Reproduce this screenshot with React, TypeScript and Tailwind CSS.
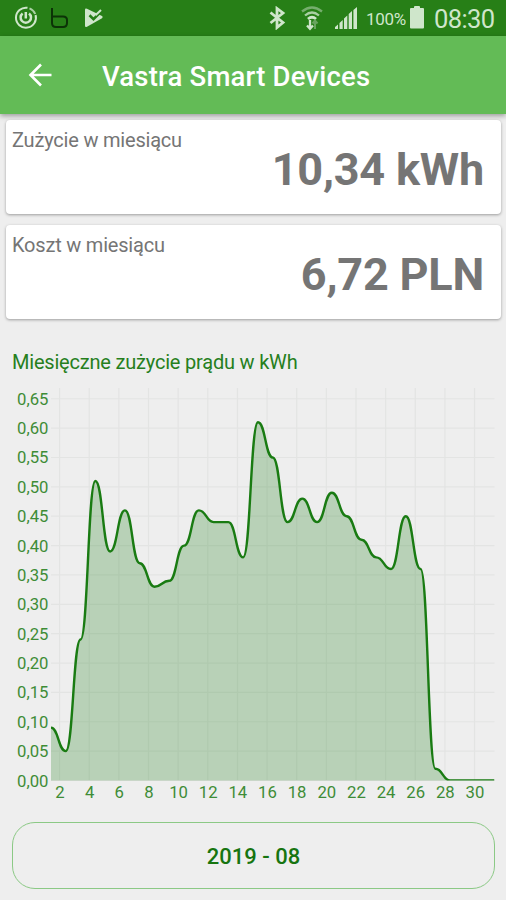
const days = [
  0.09, 0.05, 0.24, 0.51, 0.39, 0.46, 0.37, 0.33, 0.34, 0.4, 0.46, 0.44, 0.44, 0.38, 0.61, 0.55,
  0.44, 0.48, 0.44, 0.49, 0.45, 0.41, 0.38, 0.36, 0.45, 0.36, 0.02, 0, 0, 0, 0,
];

const yLabels = ["0,00", "0,05", "0,10", "0,15", "0,20", "0,25", "0,30", "0,35", "0,40", "0,45", "0,50", "0,55", "0,60", "0,65"];
const xLabels = [2, 4, 6, 8, 10, 12, 14, 16, 18, 20, 22, 24, 26, 28, 30];

const LEFT = 51;
const RIGHT = 494.5;
const TOP = 8;
const BASE = 400.5;
const STEP = (RIGHT - LEFT) / 30;

const px = (i: number) => LEFT + i * STEP;
const py = (v: number) => BASE - v * 587.3;

// horizontal bezier through every day
const line = days
  .map((v, i) => {
    if (i === 0) return `M${px(0)} ${py(v)}`;
    const mid = (px(i - 1) + px(i)) / 2;
    return `C${mid} ${py(days[i - 1])} ${mid} ${py(v)} ${px(i)} ${py(v)}`;
  })
  .join(" ");

function StatusBar() {
  return (
    <div className="flex h-[36px] shrink-0 items-center justify-between bg-[#277f17] pl-[14px] pr-[11px] text-[#cfe6cb]">
      <div className="flex items-center">
        <svg width="24" height="24" viewBox="0 0 24 24" fill="none" stroke="currentColor" strokeWidth="2">
          <path d="M13.5 1.8A10 10 0 1 0 21.6 9" />
          <path d="M15.5 2.4A10 10 0 0 1 21.2 8" stroke="#a9cfa3" />
          <path d="M8.6 7.4A5.2 5.2 0 1 0 15 7.4" strokeWidth="2.5" />
          <path d="M11.8 6v6.500" strokeWidth="2.5" />
        </svg>
        <svg className="ml-[12px]" width="20" height="24" viewBox="0 0 20 24" fill="none" stroke="#0c3307" strokeWidth="2">
          <path d="M2 2V17q0 4 4 4h7q4 0 4-4v-3q0-3.500-4-3.500H2" />
        </svg>
        <svg className="ml-[14px]" width="20" height="22" viewBox="0 0 20 22">
          <path d="M1 3q0-2 2-1.200l15 7.200q1.500 1 0 2.200L3 19.800q-2 .8-2-1z" fill="currentColor" />
          <path d="M5.500 8.300l4 3.800 9-9" fill="none" stroke="#277f17" strokeWidth="2.600" />
          <path d="M11.500 8.300l5.500-5.300" fill="none" stroke="currentColor" strokeWidth="2" />
        </svg>
      </div>
      <div className="flex items-center">
        <svg width="18" height="24" viewBox="0 0 18 24" fill="none" stroke="currentColor" strokeWidth="2.800">
          <path d="M1.500 6.500L14 16.500l-6 5V2.500L14 7 1.500 17" />
        </svg>
        <svg className="ml-[13px]" width="24" height="26" viewBox="0 0 24 26" fill="none" stroke="currentColor" strokeWidth="2.300">
          <path d="M2 6.500q10-8 20 0" stroke="#76ae6d" />
          <path d="M5 10.500q7-6 14 0" stroke="#a9cfa3" />
          <path d="M8 14q4-3.500 8 0" strokeWidth="2.800" />
          <path d="M10 15v8M7 20.500l3 3.200 3-3.200" />
          <path d="M15 24v-8M12.500 18.500l2.500-3 2.500 3" stroke="#69a45f" strokeWidth="2" />
        </svg>
        <svg className="ml-[11px]" width="23" height="24" viewBox="0 0 23 24" fill="currentColor">
          <path d="M0 23v-2l3-2.500V23zM4.500 23v-6l3.200-3v9zM9 23V12.500l3.300-3V23zM13.700 23V8l3.300-3v18zM18.400 23V4L22 1v22z" />
        </svg>
        <span className="ml-[8px] mt-[2px] w-[40px] whitespace-nowrap text-[17px] leading-none tracking-[-0.3px]">100%</span>
        <svg className="ml-[4px]" width="14" height="24" viewBox="0 0 14 24" fill="currentColor">
          <path d="M0 3q0-1 1-1h3V1q0-1 1-1h4q1 0 1 1v1h3q1 0 1 1v18.500q0 1-1 1H1q-1 0-1-1z" />
        </svg>
        <span className="ml-[10px] mt-[3px] w-[61px] whitespace-nowrap text-[25.500px] leading-none tracking-[-0.600px]">08:30</span>
      </div>
    </div>
  );
}

function Card({ label, value }: { label: string; value: string }) {
  return (
    <div className="h-[94px] rounded-[4px] bg-white px-[6px] pt-[8px] text-[#757575] shadow-[0_1px_3px_rgba(0,0,0,0.35)]">
      <div className="text-[20px] leading-[24px] tracking-[-0.2px]">{label}</div>
      <div className="-mt-[8px] pr-[11px] text-right text-[45px] font-bold leading-[52px] tracking-[-0.2px]">{value}</div>
    </div>
  );
}

function Chart() {
  return (
    <svg className="block shrink-0" width="506" height="428" viewBox="0 0 506 428">
      <g stroke="#e3e4e3" strokeWidth="1.200">
        {yLabels.map((l, i) => (
          <path key={l} d={`M${LEFT} ${py(i * 0.05)}H${RIGHT}`} />
        ))}
        {xLabels.map((l, i) => (
          <path key={l} d={`M${59.6 + i * 29.64} ${TOP}V${BASE}`} />
        ))}
      </g>
      <path d={`${line}V${BASE}H${LEFT}Z`} fill="#197b12" fillOpacity="0.25" />
      <clipPath id="plot">
        <path d={`M${LEFT} 0H${RIGHT}V${BASE}H${LEFT}Z`} />
      </clipPath>
      <path d={line} fill="none" stroke="#197b12" strokeWidth="2.400" clipPath="url(#plot)" />
      <g fill="#3e8c36" fontSize="16.700">
        {yLabels.map((l, i) => (
          <text key={l} x="48.500" y={py(i * 0.05) + 6} textAnchor="end">{l}</text>
        ))}
        {xLabels.map((l, i) => (
          <text key={l} x={60 + i * 29.64} y="418" textAnchor="middle">{l}</text>
        ))}
      </g>
    </svg>
  );
}

export default function App() {
  return (
    <div className="flex h-[900px] w-[506px] flex-col overflow-hidden bg-[#eeeeee] font-['Roboto',sans-serif]">
      <StatusBar />
      <header className="flex h-[78px] shrink-0 items-center bg-[#63bb56] pl-[28px] text-white shadow-[0_2px_5px_rgba(0,0,0,0.35)]">
        <svg width="24" height="24" viewBox="0 0 24 24" fill="none" stroke="currentColor" strokeWidth="2.600">
          <path d="M23.500 12H2.500M13 1.500L2.500 12 13 22.500" />
        </svg>
        <h1 className="ml-[50px] mt-[3px] text-[27.500px] font-medium leading-none tracking-[0.2px]">Vastra Smart Devices</h1>
      </header>
      <div className="flex flex-col gap-[11px] pl-[6px] pr-[5px] pt-[6px]">
        <Card label="Zużycie w miesiącu" value="10,34 kWh" />
        <Card label="Koszt w miesiącu" value="6,72 PLN" />
      </div>
      <h2 className="mt-[31px] h-[30px] shrink-0 pl-[12px] text-[20px] leading-[24px] tracking-[-0.2px] text-[#267f1d]">
        Miesięczne zużycie prądu w kWh
      </h2>
      <Chart />
      <button
        type="button"
        className="ml-[12px] mr-[11px] mt-[14px] h-[67px] shrink-0 rounded-[23px] border-[1.500px] border-[#8bc985] pt-[1px] text-[22px] font-medium text-[#177510]"
      >
        2019 - 08
      </button>
    </div>
  );
}
